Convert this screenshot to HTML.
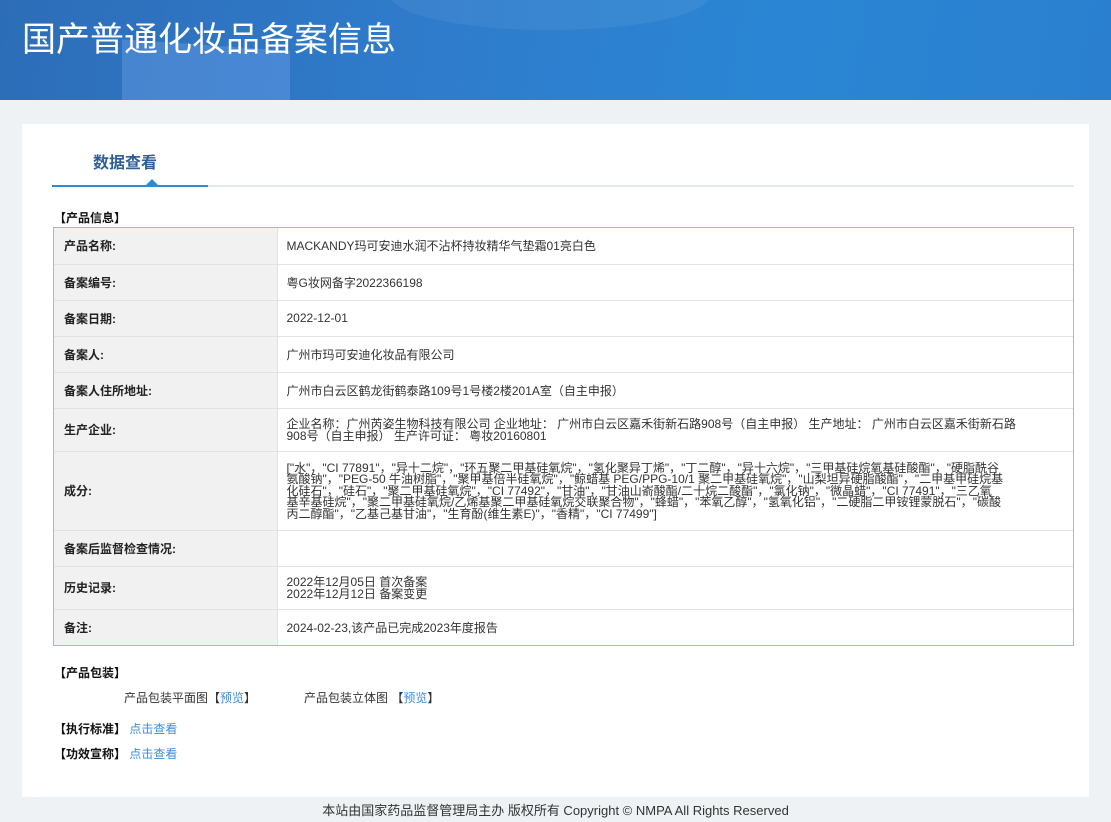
<!DOCTYPE html>
<html><head><meta charset="utf-8">
<style>
*{margin:0;padding:0;box-sizing:border-box}
body{width:1111px;height:822px;overflow:hidden;background:#eef2f5;font-family:"Liberation Sans","Noto Sans CJK SC",sans-serif;color:#333;font-size:12px;position:relative}
.hdr{position:absolute;left:0;top:0;width:1111px;height:100px;background:linear-gradient(100deg,#2d6db8 0%,#2f7ccc 40%,#2a86d4 70%,#2a80cf 100%);overflow:hidden}
.hdr .s1{position:absolute;left:122px;top:45px;width:168px;height:70px;background:rgba(120,170,240,.35);transform:skewY(4deg)}
.hdr .s2{position:absolute;left:390px;top:-40px;width:320px;height:70px;border-radius:50%;background:rgba(255,255,255,.06)}
.hdr h1{position:absolute;left:22px;top:12px;color:#fff;font-size:34px;font-weight:normal;letter-spacing:0;font-family:"Noto Sans CJK SC",sans-serif}
.card{position:absolute;left:22px;top:124px;width:1067px;height:673px;background:#fff}
.tab{position:absolute;left:71px;top:25px;font-size:16px;font-weight:bold;color:#2f5f98;font-family:"Noto Sans CJK SC",sans-serif}
.line{position:absolute;left:30px;top:61px;width:1022px;height:2px;background:#e6e9ec}
.line b{position:absolute;left:0;top:0;width:156px;height:2px;background:#2a8bd8}
.line i{position:absolute;left:94px;top:-6px;border:6px solid transparent;border-top:0;border-bottom:6px solid #2a8bd8}
.sec{position:absolute;font-weight:bold;font-size:12px;color:#111}
.tw{position:absolute;left:31px;top:103px;width:1021px;border:1px solid #9bbbe6}
table{width:100%;border-collapse:collapse}
td{border-top:1px solid #e2e2e2;font-size:12px;vertical-align:middle}
tr:first-child td{border-top:0}
td.l{width:223px;background:#f1f1f1;font-weight:bold;padding-left:10px;color:#222;border-right:1px solid #e2e2e2}
td.v{padding-left:9px;color:#333}
.ing{line-height:11.5px;padding-top:2px}
.lnk{color:#3b8ed8}
.foot{position:absolute;top:800px;left:0;width:1111px;text-align:center;font-size:13px;color:#333}
</style></head><body>
<div class="hdr"><div class="s1"></div><div class="s2"></div><h1>国产普通化妆品备案信息</h1></div>
<div class="card">
<div class="tab">数据查看</div>
<div class="line"><b></b><i></i></div>
<div class="sec" style="left:32px;top:85px">【产品信息】</div>
<div class="tw"><table>
<tr style="height:36px"><td class="l">产品名称:</td><td class="v">MACKANDY玛可安迪水润不沾杯持妆精华气垫霜01亮白色</td></tr>
<tr style="height:36px"><td class="l">备案编号:</td><td class="v">粤G妆网备字2022366198</td></tr>
<tr style="height:36px"><td class="l">备案日期:</td><td class="v">2022-12-01</td></tr>
<tr style="height:36px"><td class="l">备案人:</td><td class="v">广州市玛可安迪化妆品有限公司</td></tr>
<tr style="height:36px"><td class="l">备案人住所地址:</td><td class="v">广州市白云区鹤龙街鹤泰路109号1号楼2楼201A室（自主申报）</td></tr>
<tr style="height:43px"><td class="l">生产企业:</td><td class="v" style="line-height:12px">企业名称：广州芮姿生物科技有限公司 企业地址： 广州市白云区嘉禾街新石路908号（自主申报） 生产地址： 广州市白云区嘉禾街新石路<br>908号（自主申报） 生产许可证： 粤妆20160801</td></tr>
<tr style="height:79px"><td class="l">成分:</td><td class="v ing">["水"，"CI 77891"，"异十二烷"，"环五聚二甲基硅氧烷"，"氢化聚异丁烯"，"丁二醇"，"异十六烷"，"三甲基硅烷氧基硅酸酯"，"硬脂酰谷<br>氨酸钠"，"PEG-50 牛油树脂"，"聚甲基倍半硅氧烷"，"鲸蜡基 PEG/PPG-10/1 聚二甲基硅氧烷"，"山梨坦异硬脂酸酯"，"二甲基甲硅烷基<br>化硅石"，"硅石"，"聚二甲基硅氧烷"，"CI 77492"，"甘油"，"甘油山嵛酸酯/二十烷二酸酯"，"氯化钠"，"微晶蜡"，"CI 77491"，"三乙氧<br>基辛基硅烷"，"聚二甲基硅氧烷/乙烯基聚二甲基硅氧烷交联聚合物"，"蜂蜡"，"苯氧乙醇"，"氢氧化铝"，"二硬脂二甲铵锂蒙脱石"，"碳酸<br>丙二醇酯"，"乙基己基甘油"，"生育酚(维生素E)"，"香精"，"CI 77499"]</td></tr>
<tr style="height:36px"><td class="l">备案后监督检查情况:</td><td class="v"></td></tr>
<tr style="height:43px"><td class="l">历史记录:</td><td class="v" style="line-height:12px">2022年12月05日 首次备案<br>2022年12月12日 备案变更</td></tr>
<tr style="height:36px"><td class="l">备注:</td><td class="v">2024-02-23,该产品已完成2023年度报告</td></tr>
</table></div>
<div class="sec" style="left:32px;top:540px">【产品包装】</div>
<div style="position:absolute;left:102px;top:565px">产品包装平面图【<span class="lnk">预览</span>】</div>
<div style="position:absolute;left:282px;top:565px">产品包装立体图 【<span class="lnk">预览</span>】</div>
<div style="position:absolute;left:32px;top:596px"><b style="color:#111">【执行标准】</b> <span class="lnk">点击查看</span></div>
<div style="position:absolute;left:32px;top:621px"><b style="color:#111">【功效宣称】</b> <span class="lnk">点击查看</span></div>
</div>
<div class="foot">本站由国家药品监督管理局主办 版权所有 Copyright © NMPA All Rights Reserved</div>
</body></html>
